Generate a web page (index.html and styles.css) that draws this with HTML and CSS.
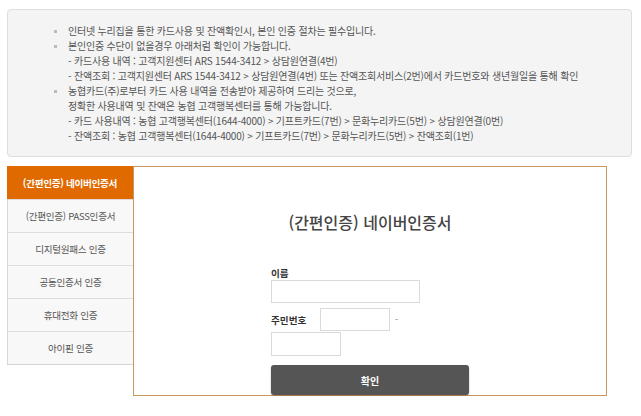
FILE: index.html
```html
<!DOCTYPE html>
<html lang="ko">
<head>
<meta charset="utf-8">
<title>본인인증</title>
<link rel="stylesheet" href="styles.css">
</head>
<body>
<div class="page">
  <div class="notice">
    <ul class="notice-list">
      <li><span class="text">인터넷 누리집을 통한 카드사용 및 잔액확인시, 본인 인증 절차는 필수입니다.</span></li>
      <li><span class="text">본인인증 수단이 없을경우 아래처럼 확인이 가능합니다.<br>- 카드사용 내역 : 고객지원센터 ARS 1544-3412 &gt; 상담원연결(4번)<br>- 잔액조회 : 고객지원센터 ARS 1544-3412 &gt; 상담원연결(4번) 또는 잔액조회서비스(2번)에서 카드번호와 생년월일을 통해 확인</span></li>
      <li><span class="text">농협카드(주)로부터 카드 사용 내역을 전송받아 제공하여 드리는 것으로,<br>정확한 사용내역 및 잔액은 농협 고객행복센터를 통해 가능합니다.<br>- 카드 사용내역 : 농협 고객행복센터(1644-4000) &gt; 기프트카드(7번) &gt; 문화누리카드(5번) &gt; 상담원연결(0번)<br>- 잔액조회 : 농협 고객행복센터(1644-4000) &gt; 기프트카드(7번) &gt; 문화누리카드(5번) &gt; 잔액조회(1번)</span></li>
    </ul>
  </div>

  <div class="auth">
    <ul class="tabs">
      <li class="tab active">(간편인증) 네이버인증서</li>
      <li class="tab">(간편인증) PASS인증서</li>
      <li class="tab">디지털원패스 인증</li>
      <li class="tab">공동인증서 인증</li>
      <li class="tab">휴대전화 인증</li>
      <li class="tab">아이핀 인증</li>
    </ul>
    <div class="panel">
      <h2 class="panel-title">(간편인증) 네이버인증서</h2>
      <form class="form">
        <label class="label label-name">이름</label>
        <input class="input input-name" type="text">
        <div class="ssn">
          <label class="label label-ssn">주민번호</label>
          <input class="input input-ssn1" type="text">
          <span class="dash">-</span>
          <input class="input input-ssn2" type="password">
        </div>
        <button type="button" class="btn">확인</button>
      </form>
    </div>
  </div>
</div>
</body>
</html>
```
FILE: styles.css
```css
* { box-sizing: border-box; }
html, body { margin: 0; padding: 0; background: #fff; }
body {
  font-family: "Noto Sans CJK KR", "Noto Sans", sans-serif;
  color: #555;
}
.page { padding: 9px 9px 0 7px; }

.notice {
  width: 625px;
  height: 148px;
  background: #f4f4f4;
  border: 1px solid #dedede;
  border-radius: 4px;
  padding: 13px 0 0 46px;
}
.notice-list { list-style: none; margin: 0; padding: 0; }
.notice-list li {
  display: grid;
  grid-template-columns: 14px 1fr;
  font-size: 10px;
  line-height: 15px;
  color: #555;
  letter-spacing: -0.2px;
}
.notice-list li::before {
  content: "";
  width: 3px;
  height: 3px;
  background: #bbb;
  margin-top: 7px;
}

.auth {
  display: flex;
  align-items: flex-start;
  margin-top: 9px;
}
.tabs {
  list-style: none;
  margin: 0;
  padding: 0;
  width: 126px;
  border-left: 1px solid #d6d6d6;
  border-bottom: 1px solid #d6d6d6;
}
.tab {
  height: 33px;
  display: flex;
  align-items: center;
  justify-content: center;
  font-size: 9.6px;
  color: #555;
  background: #f8f8f8;
  border-top: 1px solid #dcdcdc;
  letter-spacing: -0.3px;
}
.tab.active {
  background: #e16a00;
  color: #fff;
  font-weight: bold;
  border-top-color: #e16a00;
  margin-left: -1px;
}
.panel {
  width: 474px;
  height: 230px;
  border: 1px solid #c9985f;
  display: flex;
  flex-direction: column;
  align-items: center;
}
.panel-title {
  margin: 44px 0 0;
  font-size: 16px;
  line-height: 22px;
  font-weight: 500;
  color: #444;
}
.form {
  width: 198px;
  margin-top: 34px;
  display: flex;
  flex-direction: column;
  align-items: flex-start;
}
.label {
  font-size: 9.6px;
  font-weight: bold;
  color: #333;
}
.label-name { line-height: 12px; }
.input {
  border: 1px solid #dadada;
  background: #fff;
  height: 23px;
  margin: 0;
  padding: 0;
}
.input-name { width: 149px; margin-top: 1px; }
.ssn {
  display: flex;
  flex-wrap: wrap;
  align-items: center;
  width: 149px;
  margin-top: 5px;
}
.label-ssn { width: 49px; }
.input-ssn1 { width: 70px; }
.dash { font-size: 9px; color: #777; margin-left: 5px; }
.input-ssn2 { width: 70px; height: 24px; margin-top: 1px; }
.btn {
  margin-top: 9px;
  width: 198px;
  height: 30px;
  border: none;
  border-radius: 3px;
  background: #555;
  color: #fff;
  font-family: inherit;
  font-size: 10px;
  font-weight: bold;
  box-shadow: 0 1px 2px rgba(0,0,0,0.25);
}
```
